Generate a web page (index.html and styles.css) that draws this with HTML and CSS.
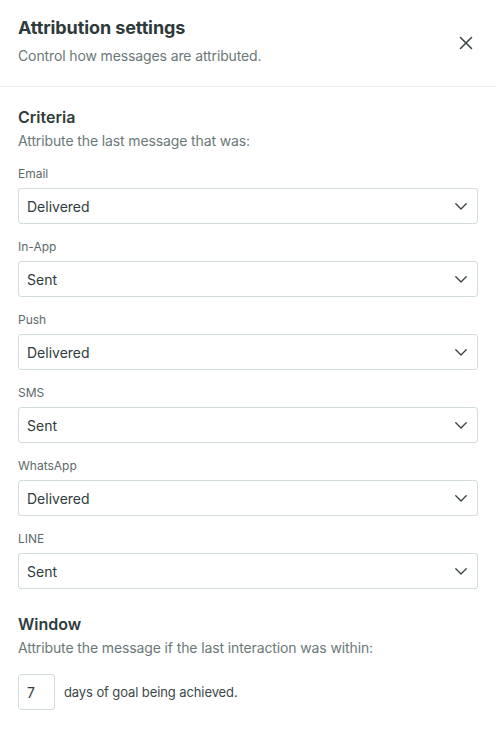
FILE: index.html
```html
<!DOCTYPE html>
<html lang="en">
<head>
<meta charset="utf-8">
<title>Attribution settings</title>
<link rel="stylesheet" href="styles.css">
</head>
<body>
<div class="panel">
  <header class="header">
    <div class="header-text">
      <h1 class="title">Attribution settings</h1>
      <p class="subtitle">Control how messages are attributed.</p>
    </div>
    <button class="close" aria-label="Close">
      <svg width="14" height="14" viewBox="0 0 14 14"><path d="M1.5 1.5L12.5 12.5M12.5 1.5L1.5 12.5" stroke="#364242" stroke-width="1.5" stroke-linecap="round" fill="none"/></svg>
    </button>
  </header>
  <main class="content">
    <section class="section">
      <h2 class="section-title">Criteria</h2>
      <p class="section-desc">Attribute the last message that was:</p>
      <div class="fields">
        <div class="field">
          <label class="label">Email</label>
          <div class="select"><span>Delivered</span><svg class="chev" width="12" height="7" viewBox="0 0 12 7"><path d="M0.8 0.8L6 6L11.2 0.8" stroke="#364242" stroke-width="1.3" fill="none" stroke-linecap="round" stroke-linejoin="round"/></svg></div>
        </div>
        <div class="field">
          <label class="label">In-App</label>
          <div class="select"><span>Sent</span><svg class="chev" width="12" height="7" viewBox="0 0 12 7"><path d="M0.8 0.8L6 6L11.2 0.8" stroke="#364242" stroke-width="1.3" fill="none" stroke-linecap="round" stroke-linejoin="round"/></svg></div>
        </div>
        <div class="field">
          <label class="label">Push</label>
          <div class="select"><span>Delivered</span><svg class="chev" width="12" height="7" viewBox="0 0 12 7"><path d="M0.8 0.8L6 6L11.2 0.8" stroke="#364242" stroke-width="1.3" fill="none" stroke-linecap="round" stroke-linejoin="round"/></svg></div>
        </div>
        <div class="field">
          <label class="label">SMS</label>
          <div class="select"><span>Sent</span><svg class="chev" width="12" height="7" viewBox="0 0 12 7"><path d="M0.8 0.8L6 6L11.2 0.8" stroke="#364242" stroke-width="1.3" fill="none" stroke-linecap="round" stroke-linejoin="round"/></svg></div>
        </div>
        <div class="field">
          <label class="label">WhatsApp</label>
          <div class="select"><span>Delivered</span><svg class="chev" width="12" height="7" viewBox="0 0 12 7"><path d="M0.8 0.8L6 6L11.2 0.8" stroke="#364242" stroke-width="1.3" fill="none" stroke-linecap="round" stroke-linejoin="round"/></svg></div>
        </div>
        <div class="field">
          <label class="label">LINE</label>
          <div class="select"><span>Sent</span><svg class="chev" width="12" height="7" viewBox="0 0 12 7"><path d="M0.8 0.8L6 6L11.2 0.8" stroke="#364242" stroke-width="1.3" fill="none" stroke-linecap="round" stroke-linejoin="round"/></svg></div>
        </div>
      </div>
    </section>
    <section class="section window">
      <h2 class="section-title">Window</h2>
      <p class="section-desc">Attribute the message if the last interaction was within:</p>
      <div class="window-row">
        <div class="num-input">7</div>
        <span class="window-text">days of goal being achieved.</span>
      </div>
    </section>
  </main>
</div>
</body>
</html>
```
FILE: styles.css
```css
* { box-sizing: border-box; }
html, body { margin: 0; padding: 0; background: #fff; }
body {
  font-family: Inter, "Noto Sans", "Liberation Sans", sans-serif;
  color: #303c3c;
}
.panel { width: 496px; }
.header {
  display: flex;
  justify-content: space-between;
  align-items: center;
  padding: 16px 18px 20px 18px;
  border-bottom: 1px solid #e6eded;
}
.header-text { display: flex; flex-direction: column; gap: 6px; }
.title {
  margin: 0;
  font-size: 18px;
  line-height: 24px;
  font-weight: 700;
  color: #2f3a3a;
  letter-spacing: -0.1px;
}
.subtitle {
  margin: 0;
  font-size: 14px;
  line-height: 20px;
  color: #6b7878;
  letter-spacing: -0.12px;
}
.close {
  border: 0;
  background: none;
  padding: 0;
  width: 24px;
  height: 24px;
  display: flex;
  align-items: center;
  justify-content: center;
  margin-right: 0;
  margin-top: 4px;
}
.content { padding: 18px 18px 0 18px; }
.section-title {
  margin: 0;
  font-size: 16px;
  line-height: 24px;
  font-weight: 600;
  color: #303c3c;
}
.section-desc {
  margin: 2px 0 0 0;
  font-size: 14px;
  line-height: 20px;
  color: #6b7878;
  letter-spacing: -0.12px;
}
.fields { display: flex; flex-direction: column; gap: 15px; margin-top: 15px; }
.field { display: flex; flex-direction: column; gap: 6px; }
.label {
  font-size: 12px;
  line-height: 16px;
  color: #5d6a6a;
}
.select {
  height: 36px;
  border: 1px solid #d2dcdc;
  border-radius: 3px;
  display: flex;
  align-items: center;
  justify-content: space-between;
  padding: 0 10px 0 8px;
  font-size: 14px;
  color: #303c3c;
}
.chev { display: block; }
.window { margin-top: 23px; }
.window-row {
  display: flex;
  align-items: center;
  gap: 9px;
  margin-top: 16px;
}
.num-input {
  width: 37px;
  height: 36px;
  border: 1px solid #d2dcdc;
  border-radius: 3px;
  display: flex;
  align-items: center;
  padding-left: 8px;
  font-size: 14px;
  color: #303c3c;
}
.window-text { font-size: 13px; color: #3c4848; letter-spacing: -0.1px; }
```
